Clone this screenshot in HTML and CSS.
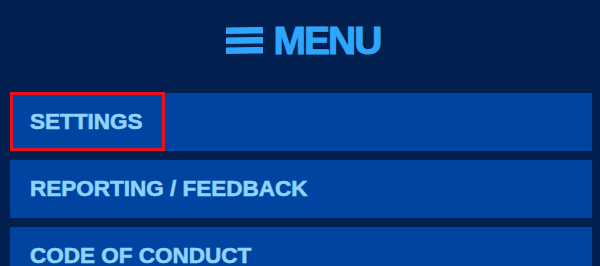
FILE: index.html
```html
<!DOCTYPE html>
<html>
<head>
<meta charset="utf-8">
<link rel="stylesheet" href="styles.css">
</head>
<body>
<div class="page">
  <header class="header">
    <svg class="burger" width="37" height="27" viewBox="0 0 37 27">
      <path d="M0 0.5 L37 0 L37 6.5 L0 7 Z" fill="#2ea6ff"/>
      <path d="M0 10.5 L37 10 L37 16.5 L0 17 Z" fill="#2ea6ff"/>
      <path d="M0 20.5 L37 20 L37 26.5 L0 27 Z" fill="#2ea6ff"/>
    </svg>
    <span class="title">MENU</span>
  </header>
  <nav class="menu">
    <div class="item item-focused"><span class="focus"></span><span class="label">SETTINGS</span></div>
    <div class="item"><span class="label">REPORTING / FEEDBACK</span></div>
    <div class="item"><span class="label">CODE OF CONDUCT</span></div>
  </nav>
</div>
</body>
</html>
```

FILE: styles.css
```css
html, body {
  margin: 0;
  padding: 0;
  background: #01204f;
  overflow: hidden;
}
.page {
  width: 600px;
  height: 266px;
  display: flex;
  flex-direction: column;
  font-family: "Liberation Sans", Arial, sans-serif;
}
.header {
  height: 93px;
  flex-shrink: 0;
  display: flex;
  align-items: center;
  justify-content: center;
  gap: 11px;
  padding-left: 6px;
  padding-bottom: 12px;
  box-sizing: border-box;
}
.burger {
  display: block;
}
.title {
  color: #2ea6ff;
  font-weight: bold;
  font-size: 39px;
  letter-spacing: -2px;
  line-height: 1;
  -webkit-text-stroke: 1px #2ea6ff;
}
.menu {
  display: flex;
  flex-direction: column;
  gap: 9px;
  padding: 0 8px 0 10px;
}
.item {
  position: relative;
  height: 58px;
  background: #0044a1;
  display: flex;
  align-items: center;
  padding-left: 20px;
  flex-shrink: 0;
}
.label {
  color: #8fd4ff;
  font-weight: bold;
  font-size: 22.5px;
  line-height: 1;
  -webkit-text-stroke: 0.6px #8fd4ff;
}
.focus {
  position: absolute;
  left: 0;
  top: -1px;
  width: 155px;
  height: 59px;
  box-sizing: border-box;
  border: 3px solid #ec0f1c;
}
```
